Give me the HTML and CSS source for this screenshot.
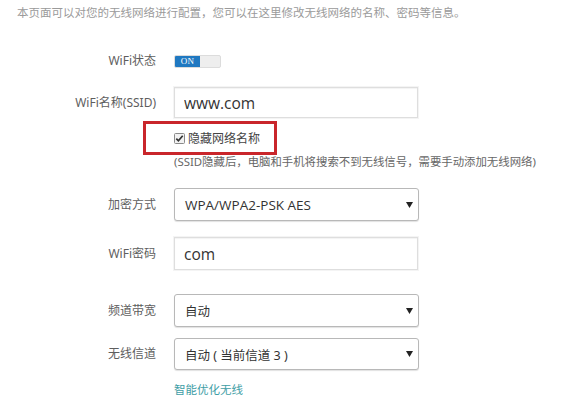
FILE: index.html
```html
<!DOCTYPE html>
<html lang="zh-CN">
<head>
<meta charset="utf-8">
<title>无线设置</title>
<link rel="stylesheet" href="styles.css">
</head>
<body>
<p class="intro">本页面可以对您的无线网络进行配置，您可以在这里修改无线网络的名称、密码等信息。</p>
<form class="form">
  <div class="row row-status">
    <span class="label">WiFi状态</span>
    <span class="toggle"><span class="toggle-on">ON</span></span>
  </div>
  <div class="row row-ssid">
    <span class="label">WiFi名称(SSID)</span>
    <input class="field" type="text" value="www.com">
  </div>
  <div class="row-hide">
    <div class="hide-box">
      <svg class="check" width="11" height="11" viewBox="0 0 11 11"><rect x="0.5" y="0.5" width="10" height="10" rx="1" fill="#f2f2f2" stroke="#8a8a8a"/><path d="M2.3 5.6 L4.4 7.8 L8.7 2.8" fill="none" stroke="#333" stroke-width="1.7"/></svg>
      <span class="hide-text">隐藏网络名称</span>
    </div>
  </div>
  <div class="row row-hint">
    <span class="label"></span>
    <span class="hint">(SSID隐藏后，电脑和手机将搜索不到无线信号，需要手动添加无线网络)</span>
  </div>
  <div class="row row-enc">
    <span class="label">加密方式</span>
    <div class="select select-enc"><span class="sel-text latin">WPA/WPA2-PSK AES</span><svg class="arrow" width="7" height="6" viewBox="0 0 7 6"><path d="M0 0 H7 L3.5 6 Z" fill="#222"/></svg></div>
  </div>
  <div class="row row-pwd">
    <span class="label">WiFi密码</span>
    <input class="field field-pwd" type="text" value="com">
  </div>
  <div class="row row-bw">
    <span class="label">频道带宽</span>
    <div class="select select-bw"><span class="sel-text">自动</span><svg class="arrow" width="7" height="6" viewBox="0 0 7 6"><path d="M0 0 H7 L3.5 6 Z" fill="#222"/></svg></div>
  </div>
  <div class="row row-ch">
    <span class="label">无线信道</span>
    <div class="select select-ch"><span class="sel-text">自动 ( 当前信道 3 )</span><svg class="arrow" width="7" height="6" viewBox="0 0 7 6"><path d="M0 0 H7 L3.5 6 Z" fill="#222"/></svg></div>
  </div>
  <div class="row row-link">
    <span class="label"></span>
    <a class="link" href="#">智能优化无线</a>
  </div>
</form>
</body>
</html>
```
FILE: styles.css
```css
* { box-sizing: border-box; }
html, body { margin: 0; padding: 0; background: #fff; }
body {
  font-family: "Noto Sans", "Noto Sans CJK SC", sans-serif;
  color: #555;
  width: 570px;
  height: 400px;
  overflow: hidden;
}
.intro {
  margin: 0;
  padding: 5px 0 0 17px;
  font-size: 11.5px;
  line-height: 16px;
  color: #9a9a9a;
  white-space: nowrap;
}
.form { display: flex; flex-direction: column; }
.row {
  display: grid;
  grid-template-columns: 156px 244px;
  column-gap: 18px;
  align-items: center;
}
.label {
  text-align: right;
  font-size: 12px;
  line-height: 16px;
  color: #5e5e5e;
  white-space: nowrap;
}
.row-status { margin-top: 32px; height: 13px; }
.toggle {
  display: flex;
  width: 47px;
  height: 13px;
  background: #eeeeee;
  border: 1px solid #dcdcdc;
  border-radius: 2px;
  overflow: hidden;
}
.toggle-on {
  width: 25px;
  height: 100%;
  background: #1f78c1;
  color: #fff;
  font-family: "Liberation Serif", serif;
  font-size: 9px;
  line-height: 11px;
  text-align: center;
  letter-spacing: 0.3px;
}
.field {
  width: 244px;
  height: 31px;
  margin: 0;
  border: 1px solid #dedede;
  box-shadow: 0 0 0 1px #f4f4f4, inset 0 1px 1px rgba(0,0,0,0.05);
  padding: 0 0 0 9px;
  font-family: "Open Sans", "Noto Sans", sans-serif;
  font-size: 15.5px;
  color: #333;
  background: #fff;
  outline: none;
}
.row-ssid { margin-top: 21px; }
.row-hide { margin-top: 3px; padding-left: 143px; }
.hide-box {
  width: 134px;
  height: 34px;
  border: 3px solid #c9262b;
  display: flex;
  align-items: center;
  padding-left: 28px;
  gap: 3px;
}
.check { display: block; flex: none; }
.hide-text { font-size: 12px; color: #444; white-space: nowrap; }
.row-hint { margin-top: 0; }
.hint {
  font-size: 11.4px;
  line-height: 14px;
  color: #666;
  white-space: nowrap;
}
.select {
  width: 245px;
  height: 33px;
  border: 1px solid #b8b8b8;
  border-radius: 3px;
  box-shadow: 0 1px 1px rgba(0,0,0,0.12);
  display: flex;
  align-items: center;
  justify-content: space-between;
  padding: 0 5px 0 10px;
  background: #fff;
}
.sel-text { font-size: 12.5px; color: #333; white-space: nowrap; }
.sel-text.latin { font-family: "Open Sans", "Noto Sans", sans-serif; font-size: 13.5px; }
.arrow { display: block; flex: none; }
.row-enc { margin-top: 19px; }
.row-pwd { margin-top: 16px; }
.field-pwd { height: 33px; }
.row-bw { margin-top: 24px; }
.row-ch { margin-top: 11px; }
.select-ch { height: 32px; }
.row-link { margin-top: 12px; }
.link {
  font-size: 11.5px;
  line-height: 16px;
  color: #3f9ea6;
  text-decoration: none;
  white-space: nowrap;
}
```
